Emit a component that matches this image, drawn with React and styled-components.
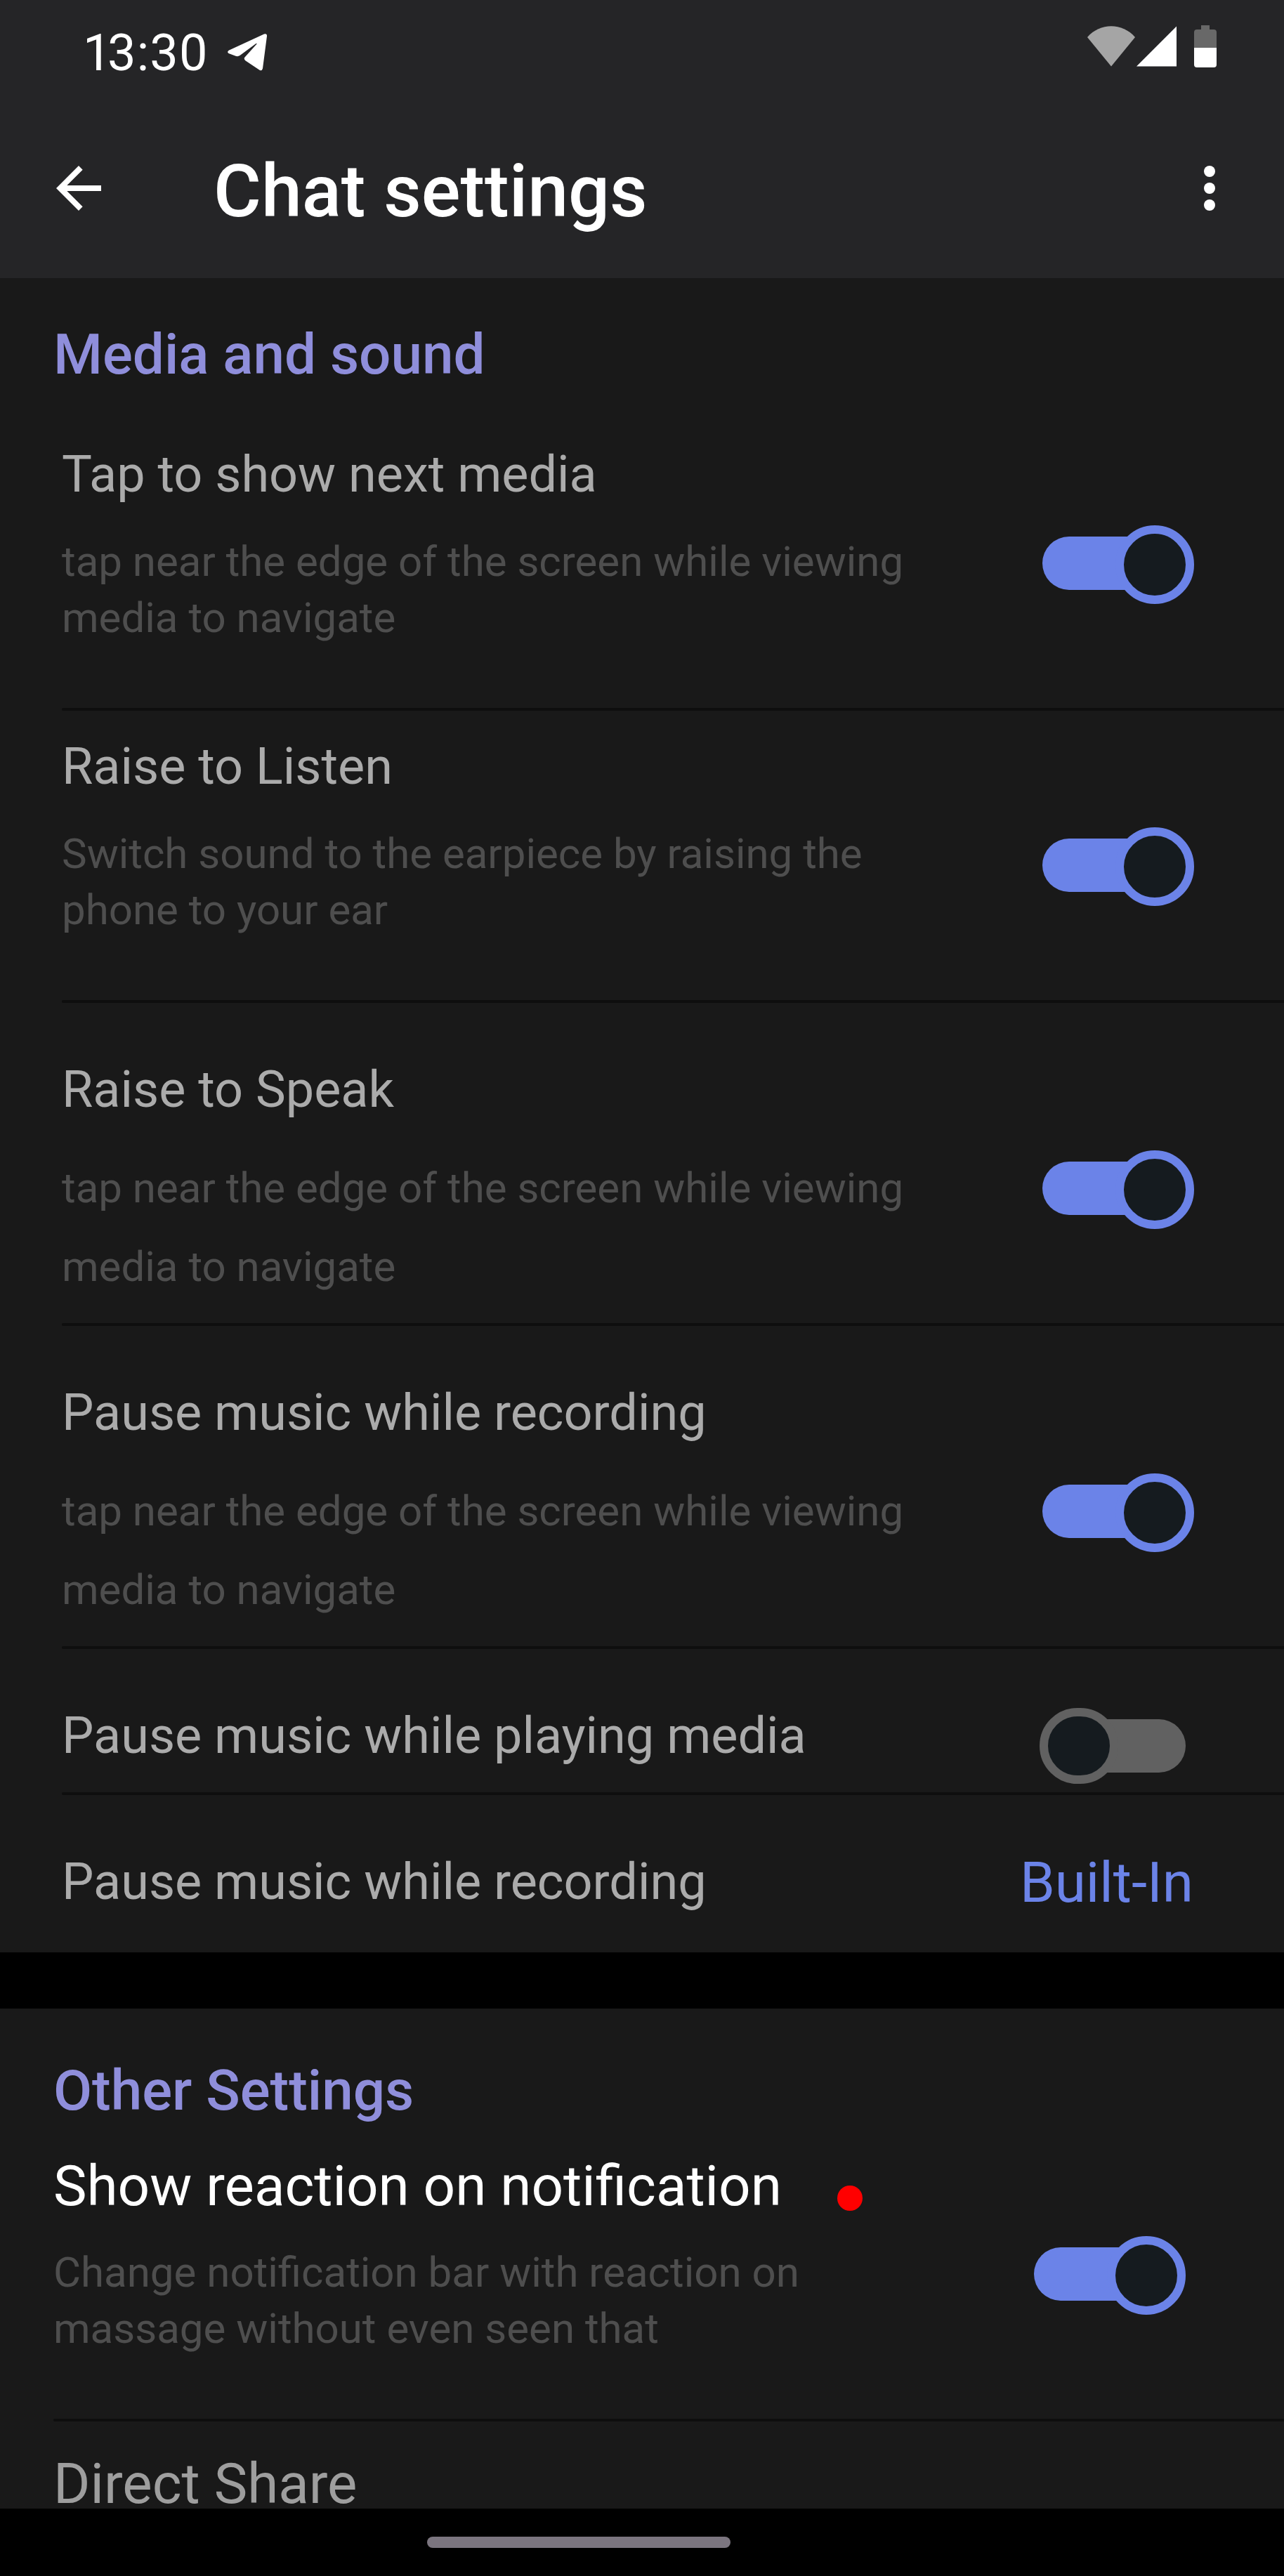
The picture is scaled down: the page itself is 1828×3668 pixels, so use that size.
import React from "react";
import styled, { createGlobalStyle } from "styled-components";

const Global = createGlobalStyle`
  body { margin: 0; background: #000; }
  * { box-sizing: border-box; }
`;

const Screen = styled.div`
  width: 1828px;
  height: 3668px;
  overflow: hidden;
  display: flex;
  flex-direction: column;
  background: #000;
  font-family: Roboto, sans-serif;
`;

const Header = styled.header`
  height: 396px;
  background: #252527;
  flex: none;
`;

const StatusBar = styled.div`
  height: 148px;
  display: flex;
  justify-content: space-between;
  padding: 36px 96px 0 118px;
`;

const StatusLeft = styled.div`
  display: flex;
  align-items: flex-start;
  gap: 26px;
`;

const Clock = styled.span`
  width: 180px;
  font-size: 72px;
  line-height: 79px;
  letter-spacing: 1.2px;
  color: #fff;
  white-space: nowrap;
  &::first-letter { letter-spacing: -5.5px; }
  display: block;
`;

const PlaneIcon = styled.svg`
  width: 57px;
  height: 53px;
  margin-top: 12px;
`;

const StatusIcons = styled.svg`
  width: 184px;
  height: 60px;
`;

const AppBar = styled.div`
  height: 248px;
  display: flex;
  align-items: flex-start;
  padding: 72px 58.5px 0 64px;
`;

const IconButton = styled.button`
  width: 96px;
  height: 96px;
  padding: 0;
  border: 0;
  background: none;
  svg { display: block; width: 96px; height: 96px; fill: #fff; }
`;

const Title = styled.h1`
  flex: 1;
  margin: -8px 0 0 144px;
  font-size: 104px;
  line-height: 121px;
  font-weight: 500;
  color: #fff;
  white-space: nowrap;
`;

const Section = styled.section`
  height: ${(p) => p.$height}px;
  margin-top: ${(p) => p.$gap || 0}px;
  background: #191919;
  flex: none;
`;

const SectionTitle = styled.h2`
  margin: 0;
  padding: ${(p) => p.$top}px 0 0 76px;
  height: ${(p) => p.$height}px;
  font-size: 80px;
  line-height: 96px;
  font-weight: 500;
  color: #8f8edb;
`;

const Row = styled.div`
  height: ${(p) => p.$height}px;
  margin-left: ${(p) => p.$inset || 88}px;
  padding-right: ${(p) => p.$right}px;
  display: flex;
  justify-content: space-between;
  align-items: flex-start;
`;

const Divider = styled.hr`
  height: 4px;
  margin: 0 0 0 ${(p) => p.$inset || 88}px;
  border: 0;
  border-radius: 2px 0 0 2px;
  background: #0e0e0e;
`;

const Copy = styled.div`
  padding-top: ${(p) => p.$top}px;
  white-space: nowrap;
`;

const Label = styled.div`
  display: flex;
  align-items: center;
  gap: 79px;
  font-size: ${(p) => (p.$large ? 80 : 72)}px;
  line-height: ${(p) => (p.$large ? 86 : 85)}px;
  color: ${(p) => p.$color || "#ababab"};
`;

const Description = styled.p`
  margin: ${(p) => p.$gap || 42}px 0 0;
  font-size: 60px;
  line-height: ${(p) => p.$line || 80}px;
  color: #4e4e4e;
`;

const UnreadDot = styled.span`
  width: 36px;
  height: 36px;
  margin-top: 34px;
  border-radius: 50%;
  background: #ff0000;
`;

const Track = styled.div`
  width: ${(p) => (p.$on ? 216 : 208)}px;
  height: 76px;
  margin-top: ${(p) => p.$top}px;
  display: flex;
  align-items: flex-start;
  justify-content: ${(p) => (p.$on ? "flex-end" : "flex-start")};
  border-radius: 38px;
  background: linear-gradient(
    to right,
    ${(p) => (p.$on ? "#6b83e8 0 160px, transparent 160px" : "transparent 0 56px, #616161 56px")}
  );
`;

const Knob = styled.div`
  width: 112px;
  height: ${(p) => (p.$on ? 112 : 108)}px;
  margin-top: -16px;
  border-radius: 56px;
  border: 12px solid ${(p) => (p.$on ? "#6b83e8" : "#616161")};
  background: #151b1f;
`;

const Value = styled.span`
  margin: ${(p) => p.$top}px 1px 0 0;
  font-size: 80px;
  line-height: 96px;
  color: #6b83e8;
`;

const NavBar = styled.footer`
  height: 96px;
  padding: 40px 0 0 608px;
  background: #000;
`;

const HomeHandle = styled.div`
  width: 432px;
  height: 16px;
  border-radius: 8px;
  background: #7b757f;
`;

function Toggle({ on, top }) {
  return (
    <Track $on={on} $top={top}>
      <Knob $on={on} />
    </Track>
  );
}

const mediaRows = [
  { label: "Tap to show next media", lines: ["tap near the edge of the screen while viewing", "media to navigate"], height: 376, top: 1, toggle: 132 },
  { label: "Raise to Listen", lines: ["Switch sound to the earpiece by raising the", "phone to your ear"], height: 412, top: 37, toggle: 182 },
  { label: "Raise to Speak", lines: ["tap near the edge of the screen while viewing", "media to navigate"], height: 456, top: 81, line: 112, toggle: 226 },
  { label: "Pause music while recording", lines: ["tap near the edge of the screen while viewing", "media to navigate"], height: 456, top: 81, line: 112, toggle: 226 },
];

export default function App() {
  return (
    <Screen>
      <Global />
      <Header>
        <StatusBar>
          <StatusLeft>
            <Clock>13:30</Clock>
            <PlaneIcon viewBox="0 0 57 53">
              <path
                fill="#fff"
                d="M52 .4Q56.300 -.8 56 3.500L50 49.500Q49 53.500 45.500 51.800L25.300 38.200Q22.600 36 24.500 33.600L41.400 14.800Q42 13.400 40.500 13.900L17.500 31Q15 32.800 11.500 31.800L1.500 28Q-1.300 26 1.700 23.800Z"
              />
            </PlaneIcon>
          </StatusLeft>
          <StatusIcons viewBox="0 0 184 60">
            <path fill="#a5a5a5" d="M0 17C18 -4 50 -4 68 17L34 58.500Z" />
            <path fill="#fff" d="M70 58.500L127 1.500V58.500Z" />
            <path fill="#686868" d="M162 0h12v6h6q4 0 4 4v22h-32V10q0 -4 4 -4h6z" />
            <path fill="#fff" d="M152 32h32v24q0 4 -4 4h-24q-4 0 -4 -4z" />
          </StatusIcons>
        </StatusBar>
        <AppBar>
          <IconButton aria-label="Back">
            <svg viewBox="0 0 24 24">
              <path d="M20 11H7.830l5.590 -5.590L12 4l-8 8 8 8 1.410 -1.410L7.830 13H20z" />
            </svg>
          </IconButton>
          <Title>Chat settings</Title>
          <IconButton aria-label="More options">
            <svg viewBox="0 0 24 24">
              <circle cx="12" cy="6" r="2" />
              <circle cx="12" cy="12" r="2" />
              <circle cx="12" cy="18" r="2" />
            </svg>
          </IconButton>
        </AppBar>
      </Header>

      <Section $height={2384}>
        <SectionTitle $top={61} $height={236}>Media and sound</SectionTitle>
        {mediaRows.map((r) => (
          <React.Fragment key={r.label}>
            <Row $height={r.height} $right={128}>
              <Copy $top={r.top}>
                <Label>{r.label}</Label>
                <Description $line={r.line}>
                  {r.lines[0]}
                  <br />
                  {r.lines[1]}
                </Description>
              </Copy>
              <Toggle on top={r.toggle} />
            </Row>
            <Divider />
          </React.Fragment>
        ))}
        <Row $height={204} $right={140}>
          <Copy $top={81}>
            <Label>Pause music while playing media</Label>
          </Copy>
          <Toggle top={100} />
        </Row>
        <Divider />
        <Row $height={224} $right={128}>
          <Copy $top={81}>
            <Label>Pause music while recording</Label>
          </Copy>
          <Value $top={77}>Built-In</Value>
        </Row>
      </Section>

      <Section $height={712} $gap={80}>
        <SectionTitle $top={69} $height={200}>Other Settings</SectionTitle>
        <Row $height={384} $inset={76} $right={140}>
          <Copy $top={10}>
            <Label $large $color="#fff">
              Show reaction on notification
              <UnreadDot />
            </Label>
            <Description $gap={40}>
              Change notification bar with reaction on
              <br />
              massage without even seen that
            </Description>
          </Copy>
          <Toggle on top={140} />
        </Row>
        <Divider $inset={76} />
        <Row $height={124} $inset={76} $right={140}>
          <Copy $top={46}>
            <Label $large $color="#9e9e9e">Direct Share</Label>
          </Copy>
        </Row>
      </Section>
      <NavBar>
        <HomeHandle />
      </NavBar>
    </Screen>
  );
}
